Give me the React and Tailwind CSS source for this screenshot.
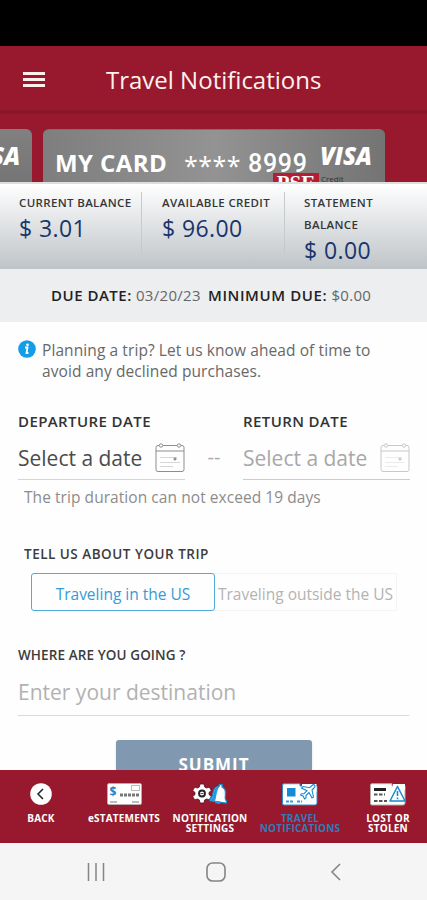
import React from 'react';

const Visa = ({ className = '' }) => (
  <p className={`font-['Open_Sans',sans-serif] font-extrabold italic text-white text-[24px] leading-6 tracking-[-0.2px] ${className}`}>VISA</p>
);

const CalendarIcon = ({ className }) => (
  <svg className={className} width="30" height="30" viewBox="0 0 30 30" fill="none" stroke="currentColor">
    <path d="M4 2.500H3A2 2 0 0 0 1 4.500V26.500a2 2 0 0 0 2 2H27a2 2 0 0 0 2-2V4.500a2 2 0 0 0-2-2H26M8 2.500H22M1 8H29" />
    <circle cx="6" cy="2.500" r="1.700" />
    <circle cx="24" cy="2.500" r="1.700" />
    <path d="M5 14.500H22M5 19.500H25M5 23.500H18" opacity=".35" />
    <path d="M18.500 16h3M20 14.500v3" strokeWidth="1.500" />
  </svg>
);

const BackIcon = () => (
  <svg width="22" height="22" viewBox="0 0 22 22">
    <circle cx="11" cy="11" r="10.800" fill="#fff" />
    <path d="M13 6L8 11l5 5" fill="none" stroke="#222" strokeWidth="1.500" />
  </svg>
);

const StatementIcon = () => (
  <svg width="35" height="22" viewBox="0 0 35 22">
    <rect x=".5" y=".5" width="34" height="21" rx="1.500" fill="#fff" stroke="#b9a9ad" />
    <text x="2.500" y="13" fontSize="12" fontWeight="700" fill="#168bd3">$</text>
    <rect x="24.500" y="2.500" width="8" height="5" fill="#fff" stroke="#bbb" />
    <path d="M13 12H33" stroke="#777" strokeWidth="3" strokeDasharray="3 1" />
    <path d="M3 19H10M25 19H32" stroke="#bbb" strokeWidth="2" />
  </svg>
);

const SettingsIcon = () => (
  <svg width="35" height="22" viewBox="0 0 35 22">
    {/* gear */}
    <g transform="translate(9 10.500)" fill="#fff" stroke="#4a1018" strokeWidth=".8" strokeLinejoin="round">
      <path d="M-2-9.500H2L2.600-6.600 4.600-5.500 7.300-6.400 9.300-3 7-1V1L9.300 3 7.300 6.400 4.600 5.500 2.600 6.600 2 9.500H-2L-2.600 6.600-4.600 5.500-7.300 6.400-9.300 3-7 1V-1L-9.300-3-7.300-6.400-4.600-5.500-2.600-6.600z" />
      <circle r="3" stroke="#222" strokeWidth="1.800" />
      <path d="M-1.500 0h3" stroke="#222" />
    </g>
    {/* bell */}
    <g transform="rotate(8 26 11)">
      <path d="M18 17c2-1 2-3 2-6 0-4 2-7 5-7.500V1.500h3v2c3 1 4.500 4 4.500 7.500s0 5 2 6v2H18z" fill="#fff" stroke="#168bd3" strokeWidth="1.300" />
      <path d="M18 18c3-2 2-5 2.500-8 .5-4 2-6 4.500-6-2 5-1 10-2 15h-5z" fill="#239be2" />
      <path d="M23.500 19.500h5" stroke="#239be2" strokeWidth="2.500" />
    </g>
  </svg>
);

const TravelIcon = () => (
  <svg width="36" height="23" viewBox="0 0 36 23">
    <path d="M2 .7H18V3H35V20a2 2 0 0 1-2 2H2a1.500 1.500 0 0 1-1.500-1.500V2A1.500 1.500 0 0 1 2 .7z" fill="#fff" stroke="#318dc8" />
    <path d="M20 1H34.500V9H20z" fill="#fff" />
    <rect x="5" y="5" width="8.500" height="8.500" fill="#168bd3" />
    <path d="M4 18.500H12M15 18.500H20" stroke="#3a9ad3" strokeWidth="2" strokeDasharray="3 1" />
    <path d="M32.500 2c1 .8.500 2-.5 3l-2 2 1.500 7-1.500 1-3-5.500-3 3v2.500L22.500 16l-1.200-2.800L18.500 12l1-1.300H22l3-3L19.500 5 21 3.500l6.500 1.200L30 2.500c.8-.8 1.800-1 2.500-.5z" fill="#fff" stroke="#168bd3" strokeWidth="1.100" />
  </svg>
);

const LostIcon = () => (
  <svg width="36" height="23" viewBox="0 0 36 23">
    <path d="M2 .7H22V3H35V20a2 2 0 0 1-2 2H2a1.500 1.500 0 0 1-1.500-1.500V2A1.500 1.500 0 0 1 2 .7z" fill="#fff" stroke="#baa" />
    <path d="M23 1h12v6H23z" fill="#fff" />
    <path d="M4 6.500H16" stroke="#222" strokeWidth="3" />
    <path d="M4 11.500H15M4 18H17" stroke="#555" strokeWidth="2" strokeDasharray="3.500 1.500" />
    <path d="M27.500 3.500L35 18H20z" fill="#fff" stroke="#168bd3" strokeWidth="1.500" strokeLinejoin="round" />
    <path d="M27.500 8v5M27.500 14.500v1.700" stroke="#168bd3" strokeWidth="1.600" />
  </svg>
);

const Balance = ({ label, amount, className }) => (
  <div className={`h-[62px] ${className}`}>
    <div className="text-[11.500px] leading-[22px] font-semibold tracking-[0.35px] text-[#343638]">{label}</div>
    <p className="text-[23px] leading-7 tracking-[0.4px] text-[#18356d]">{amount}</p>
  </div>
);

const DateField = ({ label, color, icon, line }) => (
  <div className="w-[167px]">
    <p className="whitespace-nowrap text-[15px] leading-6 font-semibold tracking-[0.4px] text-[#333]">{label}</p>
    <div className={`flex h-[47px] items-center justify-between border-b pt-1 ${line}`}>
      <span className={`whitespace-nowrap pt-0.5 text-[21px] ${color}`}>Select a date</span>
      <CalendarIcon className={icon} />
    </div>
  </div>
);

const Tab = ({ icon, label, className = 'text-white', width }) => (
  <button className={`flex shrink-0 flex-col items-center pt-3 text-[10px] leading-[10px] font-bold tracking-[0.2px] whitespace-pre-line ${className} ${width}`}>
    <div className="flex h-[24px] items-center">{icon}</div>
    <p className="mt-[7px]">{label}</p>
  </button>
);

const App = () => {
  return (
    <div className="flex h-[900px] w-[427px] flex-col overflow-hidden bg-[#fefefe] font-['Open_Sans','Noto_Sans',sans-serif]">
      <div className="h-[46px] shrink-0 bg-black"></div>

      <header className="flex h-[68px] shrink-0 items-center border-b-4 border-[#8b1729] bg-[#98192d] pt-1">
        <button className="mb-0.5 ml-[23px] flex w-[22px] flex-col gap-[3px]">
          <span className="h-[3px] bg-[#fff0ef]"></span>
          <span className="h-[3px] bg-[#fff0ef]"></span>
          <span className="h-[3px] bg-[#fff0ef]"></span>
        </button>
        <h1 className="mb-px ml-[61px] whitespace-nowrap text-2xl text-[#fff1ef]">Travel Notifications</h1>
      </header>

      {/* card carousel, cut off by the balances below it */}
      <div className="flex h-[68px] shrink-0 gap-[11px] overflow-hidden bg-[#98192d] pt-[15px]">
        <div className="flex h-[80px] w-8 shrink-0 justify-end overflow-hidden rounded-tr-md bg-linear-to-b from-[#808080] to-[#707070] pr-[12px] pt-[15px]">
          <Visa />
        </div>
        <div className="relative flex h-[80px] w-[342px] shrink-0 rounded-t-md border-t border-[#757575] bg-linear-to-r from-[#7e7e7e] via-[#939393] to-[#747474] pl-3 pt-[17px] text-white">
          <p className="w-[129px] whitespace-nowrap text-[24px] leading-8 font-bold tracking-[0.4px]">MY CARD</p>
          <p className="w-[64px] whitespace-nowrap text-[25px] leading-9 tracking-[0.5px]">****</p>
          <p className="w-[72px] whitespace-nowrap font-[Roboto,sans-serif] text-[25px] leading-[34px] font-medium tracking-[0.7px]">8999</p>
          <Visa className="-mt-[3px]" />
          <div className="absolute left-[230px] top-[43px] flex">
            <p className="h-8 w-[46px] bg-[#b51e32] text-center font-['Liberation_Serif',serif] text-[21px] leading-[20px] font-bold">PSE</p>
            <p className="ml-0.5 text-[8px] leading-[11px] text-[#333]">Credit</p>
          </div>
        </div>
      </div>

      <section className="flex h-[87px] shrink-0 border-t-2 border-[#dedede] bg-linear-to-b from-white to-[#bfc4c8] pt-[8px]">
        <Balance label="CURRENT BALANCE" amount="$ 3.01" className="w-[142px] whitespace-nowrap border-r border-[#c5cacc] pl-[19px]" />
        <Balance label="AVAILABLE CREDIT" amount="$ 96.00" className="w-[143px] whitespace-nowrap border-r border-[#c5cacc] pl-5" />
        <Balance label={<>STATEMENT<br />BALANCE</>} amount="$ 0.00" className="pl-[19px]" />
      </section>

      <div className="flex h-[53px] shrink-0 items-center gap-1.5 whitespace-nowrap bg-[#edeef0] pl-[51px] text-[15px] tracking-[0.3px] text-[#666]">
        <p className="w-[151px]"><b className="font-semibold tracking-[0.5px] text-[#222]">DUE DATE:</b> 03/20/23</p>
        <p><b className="font-semibold tracking-[0.6px] text-[#222]">MINIMUM DUE:</b> $0.00</p>
      </div>

      <main className="h-[448px] shrink-0 overflow-hidden pt-[18px]">
        <div className="flex pl-[18px]">
          <svg className="mr-[6px] shrink-0" width="18" height="18" viewBox="0 0 18 18">
            <circle cx="9" cy="9" r="8.800" fill="#139ce8" />
            <circle cx="9.500" cy="4.700" r="1.300" fill="#fff" />
            <path d="M7 7.500h2.500L8.500 13h2" fill="none" stroke="#fff" strokeWidth="1.800" />
          </svg>
          <p className="whitespace-nowrap text-[15.500px] leading-[21px] tracking-[0.09px] text-[#686868]">Planning a trip? Let us know ahead of time to<br />avoid any declined purchases.</p>
        </div>

        <div className="mt-[27px] flex pl-[18px]">
          <DateField label="DEPARTURE DATE" color="text-[#4b4b4b]" icon="text-[#8d8d8d]" line="border-[#d5d5d5]" />
          <span className="w-[58px] pt-[24px] text-center text-xl leading-[47px] text-[#aaa]">--</span>
          <DateField label="RETURN DATE" color="text-[#a8a8a8]" icon="text-[#c8c8c8]" line="border-[#ccc]" />
        </div>
        <p className="mt-[6px] pl-[24px] text-[15.500px] leading-[22px] tracking-[0.06px] text-[#8c8c8c]">The trip duration can not exceed 19 days</p>

        <h2 className="mt-[36px] pl-6 text-[13.500px] leading-5 font-semibold tracking-[0.5px] text-[#3c3c3c]">TELL US ABOUT YOUR TRIP</h2>
        <div className="mt-[9px] flex h-[38px] whitespace-nowrap pl-[31px] text-[15.500px]">
          <button className="w-[184px] rounded-[3px] border border-[#52a9dc] pt-[5px] text-[#369bd7]">Traveling in the US</button>
          <button className="flex w-[182px] items-center justify-center border border-l-0 border-[#f4f4f4] pt-[5px] text-[#b3b3b3]">Traveling outside the US</button>
        </div>

        <h2 className="mt-[34px] pl-[18px] text-[13.500px] leading-5 font-semibold tracking-[0.1px] text-[#3c3c3c]">WHERE ARE YOU GOING ?</h2>
        <div className="mx-[18px] h-[51px] border-b border-[#d9d9d9] pt-[13px] text-[21px] leading-[28px] text-[#b2b2b2]">Enter your destination</div>
        <button className="mt-[24px] ml-[116px] block h-[48px] w-[196px] rounded-[3px] bg-[#8099b1] pt-0.5 text-[17px] font-bold tracking-[1px] text-white shadow">SUBMIT</button>
      </main>

      <nav className="flex h-[73px] shrink-0 bg-[#98192d]">
        <Tab icon={<BackIcon />} label="BACK" width="w-[82px]" />
        <Tab icon={<StatementIcon />} label="eSTATEMENTS" width="w-[84px]" />
        <Tab icon={<SettingsIcon />} label={'NOTIFICATION\nSETTINGS'} width="w-[88px]" />
        <Tab icon={<TravelIcon />} label={'TRAVEL\nNOTIFICATIONS'} className="text-[#307bbb]" width="w-[92px]" />
        <Tab icon={<LostIcon />} label={'LOST OR\nSTOLEN'} width="w-[82px] pl-0.5" />
      </nav>

      {/* android buttons */}
      <footer className="flex h-[57px] shrink-0 items-center bg-[#f5f5f5] pl-[87px] text-[#858585]">
        <svg width="18" height="18" fill="none" stroke="currentColor" strokeWidth="1.500"><path d="M1.500 0v18M9 0v18M16.500 0v18" /></svg>
        <svg className="ml-[101px]" width="20" height="20" fill="none" stroke="currentColor" strokeWidth="1.600"><rect x="1" y="1" width="18" height="18" rx="5.500" /></svg>
        <svg className="ml-[104px]" width="12" height="18" fill="none" stroke="currentColor" strokeWidth="1.600"><path d="M10 1L2 9l8 8" /></svg>
      </footer>
    </div>
  );
};

export default App;
